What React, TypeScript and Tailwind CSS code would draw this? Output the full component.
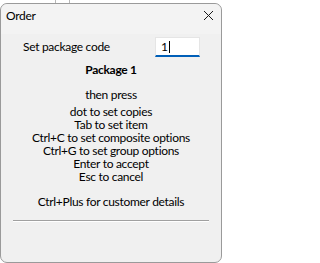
import React from 'react';

const font = { fontFamily: 'Lato, "Noto Sans", sans-serif' };

const keys = [
  'dot to set copies',
  'Tab to set item',
  'Ctrl+C to set composite options',
  'Ctrl+G to set group options',
  'Enter to accept',
  'Esc to cancel',
];

function CloseIcon() {
  return (
    <svg width="11" height="11" viewBox="0 0 11 11" className="block">
      <path d="M1 1 L10 10 M10 1 L1 10" stroke="#1a1a1a" strokeWidth="1" fill="none" />
    </svg>
  );
}

export default function App() {
  return (
    <div
      className="w-[222px] h-[263px] bg-white overflow-hidden text-[12px] leading-[13px] tracking-[-0.3px] text-black"
      style={font}
    >
      {/* window behind the dialog */}
      <div className="h-[3px] flex">
        <div className="ml-[55px] w-px bg-[#b8b8b8]" />
        <div className="ml-[13px] w-px bg-[#b8b8b8]" />
      </div>

      <div className="h-[260px] bg-[#f0f0f0] border border-[#9a9a9a] rounded-[7px] flex flex-col">
        {/* title bar */}
        <div className="h-[30px] flex items-start justify-between rounded-t-[7px] bg-[#f3f3f3]">
          <span className="mt-[5px] ml-[5px] text-[12px] leading-[13px]">Order</span>
          <div className="mt-[6px] mr-[7px]">
            <CloseIcon />
          </div>
        </div>

        {/* content */}
        <div className="flex flex-col">
          <div className="mt-[3px] flex items-start">
            <span className="ml-[22px] mt-[3px]">Set package code</span>
            <div className="ml-auto mr-[21px] w-[45px] h-[20px] bg-white border border-[#e5e5e5] border-b-2 border-b-[#005fb8] flex items-center pl-[5px]">
              <span>1</span>
              <span className="w-px h-[12px] bg-black ml-px" />
            </div>
          </div>

          <div className="mt-[6px] text-center font-bold">Package 1</div>
          <div className="mt-[12px] text-center">then press</div>
          <div className="mt-[4px] flex flex-col items-center">
            {keys.map((k) => (
              <div key={k}>{k}</div>
            ))}
          </div>
          <div className="mt-[12px] text-center">Ctrl+Plus for customer details</div>
          <div className="mt-[12px] mx-[12px] h-px bg-[#a0a0a0] border-b border-white box-content" />
        </div>
      </div>
    </div>
  );
}
